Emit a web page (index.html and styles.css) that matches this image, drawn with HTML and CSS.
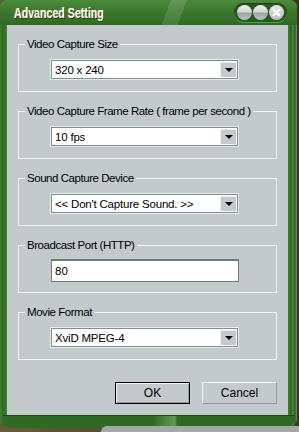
FILE: index.html
```html
<!DOCTYPE html>
<html lang="en">
<head>
    <meta charset="UTF-8">
    <title>Advanced Setting</title>
    <link rel="stylesheet" href="styles.css">
</head>
<body>
    <div class="window">
        <div class="titlebar">
            <span class="title">Advanced Setting</span>
            <div class="caption-buttons">
                <span class="cap-btn"></span>
                <span class="cap-btn"></span>
                <span class="cap-btn close">
                    <svg width="9" height="9" viewBox="0 0 9 9"><path d="M1.5 1.5 L7.5 7.5 M7.5 1.5 L1.5 7.5" stroke="#fff" stroke-width="2" stroke-linecap="round"/></svg>
                </span>
            </div>
        </div>

        <div class="client">
            <fieldset class="group">
                <legend>Video Capture Size</legend>
                <div class="combo">
                    <span class="combo-text">320 x 240</span>
                    <span class="combo-arrow"></span>
                </div>
            </fieldset>

            <fieldset class="group">
                <legend>Video Capture Frame Rate ( frame per second )</legend>
                <div class="combo">
                    <span class="combo-text">10 fps</span>
                    <span class="combo-arrow"></span>
                </div>
            </fieldset>

            <fieldset class="group">
                <legend>Sound Capture Device</legend>
                <div class="combo">
                    <span class="combo-text">&lt;&lt; Don't Capture Sound. &gt;&gt;</span>
                    <span class="combo-arrow"></span>
                </div>
            </fieldset>

            <fieldset class="group">
                <legend>Broadcast Port (HTTP)</legend>
                <div class="textbox">80</div>
            </fieldset>

            <fieldset class="group">
                <legend>Movie Format</legend>
                <div class="combo">
                    <span class="combo-text">XviD MPEG-4</span>
                    <span class="combo-arrow"></span>
                </div>
            </fieldset>

            <div class="buttons">
                <button class="btn default">OK</button>
                <button class="btn">Cancel</button>
            </div>
        </div>

        <div class="bottom-band"></div>
    </div>
    <div class="desk">
        <div class="desk-tab"></div>
    </div>
</body>
</html>
```

FILE: styles.css
```css
body {
    margin: 0;
    padding: 0;
    width: 299px;
    height: 432px;
    overflow: hidden;
    background: linear-gradient(90deg, #6a5a3c, #3c3526);
    font-family: "Liberation Sans", Arial, sans-serif;
    font-size: 11px;
}

.window {
    width: 297px;
    height: 428px;
    border-radius: 7px 7px 9px 9px;
    background: linear-gradient(90deg, #3f7f2f 0, #2f6a24 3px, #3c7a2d 6px, #3c7a2d 289px, #2d6322 291px, #4a8c3a 293px, #2b5f21 295px, #7d8a80 297px);
    display: flex;
    flex-direction: column;
    box-sizing: border-box;
}

/* barra de titulo */
.titlebar {
    height: 25px;
    display: flex;
    align-items: center;
    justify-content: space-between;
    padding: 0 10px 0 14px;
    border-radius: 7px 7px 0 0;
    background:
        linear-gradient(110deg, transparent 0, transparent 160px, rgba(255,255,255,0.12) 161px, rgba(255,255,255,0.12) 175px, transparent 176px),
        linear-gradient(180deg, #4c8b3b 0, #3d7a2e 40%, #2f6a24 100%);
}

.title {
    color: #fff;
    font-family: "Liberation Sans", Arial, sans-serif;
    font-weight: bold;
    font-size: 14px;
    display: inline-block;
    transform: scaleX(0.76);
    transform-origin: left center;
    text-shadow: 1px 1px 0 #1d3d14, -1px 0 1px rgba(255, 200, 80, 0.5);
    white-space: nowrap;
}

.caption-buttons {
    display: flex;
    gap: 1px;
    padding: 2px 3px;
    border-radius: 10px;
    background: #2a5a1f;
    box-shadow: inset 0 1px 1px #1c3e14, 0 1px 0 #5d9a4b;
}

.cap-btn {
    width: 15px;
    height: 15px;
    border-radius: 50%;
    background: linear-gradient(180deg, #eef1ef 0, #d3d8d6 45%, #9ea7a4 55%, #bfc6c3 100%);
    display: flex;
    align-items: center;
    justify-content: center;
}

.cap-btn.close {
    background: linear-gradient(180deg, #e3e8e6 0, #b9c1be 100%);
}

/* area cliente */
.client {
    height: 390px;
    margin: 0 9px 0 7px;
    background-color: #c3cacc;
    padding: 12px 11px 0 11px;
    box-sizing: border-box;
}

.group {
    margin: 0 0 12px 0;
    padding: 9px 0 11px 6px;
    border: 1px solid #eef2f3;
    height: 55px;
    box-sizing: border-box;
}

.group legend {
    padding: 0 2px;
    color: #000;
    line-height: 14px;
    white-space: nowrap;
    font-size: 11.5px;
    letter-spacing: -0.45px;
}

.combo {
    margin-left: 26px;
    width: 187px;
    height: 19px;
    box-sizing: border-box;
    border: 1px solid #7e8f99;
    outline: 1px solid #e6ecee;
    background-color: #fff;
    display: flex;
    align-items: center;
    justify-content: space-between;
}

.combo-text {
    padding-left: 3px;
    font-size: 11.5px;
    white-space: nowrap;
    letter-spacing: -0.2px;
}

.combo-arrow {
    width: 16px;
    height: 15px;
    margin-right: 1px;
    background-color: #c3cacc;
    border-top: 1px solid #e8eef0;
    border-left: 1px solid #e8eef0;
    box-sizing: border-box;
    display: flex;
    align-items: center;
    justify-content: center;
}

.combo-arrow::after {
    content: "";
    border-left: 4px solid transparent;
    border-right: 4px solid transparent;
    border-top: 4px solid #000;
}

.textbox {
    margin-left: 26px;
    width: 188px;
    height: 23px;
    box-sizing: border-box;
    border: 1px solid #6d7c85;
    border-top-width: 2px;
    background-color: #fff;
    padding: 2px 0 0 3px;
    font-size: 11.5px;
    line-height: 17px;
    margin-top: -2px;
}

.buttons {
    display: flex;
    justify-content: flex-end;
    gap: 12px;
    margin-top: 22px;
}

.btn {
    width: 75px;
    height: 22px;
    background-color: #c3cacc;
    font-family: "Liberation Sans", Arial, sans-serif;
    font-size: 12px;
    border: 1px solid;
    border-color: #f1f5f6 #8c9ba3 #8c9ba3 #f1f5f6;
    padding: 0;
}

.btn.default {
    border: 1px solid #000;
    box-shadow: inset 1px 1px 0 #f1f5f6, inset -1px -1px 0 #8c9ba3;
}

.bottom-band {
    flex: 1;
    margin: 0 3px;
    border-top: 1px solid #22481a;
    border-radius: 0 0 8px 8px;
    background: linear-gradient(90deg, #2f6a24 0, #2f6a24 150px, #5f9c4e 172px, #2f6a24 174px, #2f6a24 100%);
}

.desk {
    height: 4px;
    display: flex;
    justify-content: flex-end;
}

.desk-tab {
    width: 198px;
    height: 6px;
    margin-top: -2px;
    background-color: #a4a8a6;
    border-radius: 6px 0 0 0;
}
```
